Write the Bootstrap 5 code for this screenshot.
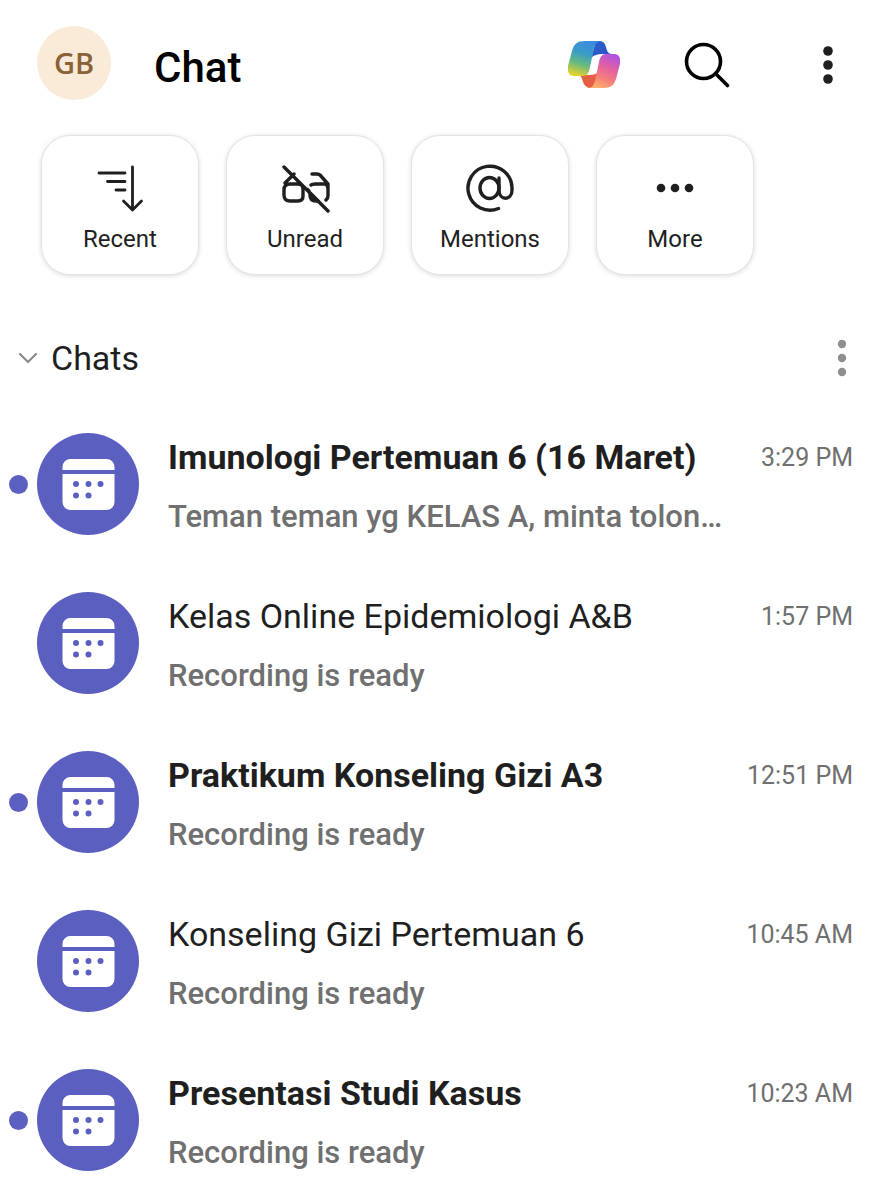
<!DOCTYPE html>
<html lang="id">
<head>
<meta charset="utf-8">
<meta name="viewport" content="width=device-width, initial-scale=1">
<title>Chat</title>
<link href="https://cdn.jsdelivr.net/npm/bootstrap@5.3.0/dist/css/bootstrap.min.css" rel="stylesheet">
<style>
  body { font-family: Roboto, "Liberation Sans", sans-serif; color: #1f1f1f; background: #fff; }
  .btn { --bs-btn-color: #1f1f1f; }
  .app-bar { padding: 26px 60px 0 37px; height: 126px; }
  .profile { width: 74px; height: 74px; background: #faebd9; color: #8a6238; font: 600 29px/74px "Open Sans", sans-serif; }
  .screen-title { font-size: 42px; line-height: 52px; font-weight: 500; color: #000; margin: 16px 0 0 43px; }
  .bar-actions { gap: 64px; padding-top: 12px; }
  .overflow-menu { margin-left: 29px; }
  .filters { gap: 27px; padding: 9px 41px 0; }
  .filter { width: 158px; height: 140px; border: 1px solid #e4e4e4; border-radius: 29px; box-shadow: 0 1px 5px rgba(0,0,0,.14); font-size: 24px; line-height: 28px; }
  .filter svg { margin-top: 6px; }
  .section-bar { padding: 0 46px 0 18px; margin-top: 63px; height: 40px; }
  .section-title { font-size: 34px; line-height: 40px; gap: 13px; padding-top: 2px; }
  .chats { padding-top: 55px; }
  .chat { padding: 0 40px 0 9px; margin-bottom: 57px; height: 102px; color: #1f1f1f; }
  .unread-slot { width: 28px; }
  .unread-slot span { width: 19px; height: 19px; background: #5b5fc0; }
  .chat-body { margin-left: 29px; padding-top: 3px; }
  .chat-name { font-size: 34px; line-height: 42px; font-weight: 400; }
  .unread .chat-name { font-weight: 700; }
  .chat-time { font-size: 25px; line-height: 44px; color: #707070; }
  .chat-preview { font-size: 31px; line-height: 40px; font-weight: 500; color: #707070; margin: 17px 100px 0 0; }
</style>
</head>
<body>
<svg class="d-none" aria-hidden="true">
  <symbol id="meeting" viewBox="0 0 102 102">
    <circle cx="51" cy="51" r="51" fill="#5b5fc0"/>
    <path fill="#fff" d="M25.500 37v-3a8 8 0 0 1 8-8h36a8 8 0 0 1 8 8v3zM25.500 41h52v28a8 8 0 0 1-8 8h-36a8 8 0 0 1-8-8z"/>
    <g fill="#5b5fc0"><circle cx="39" cy="51" r="3"/><circle cx="51.500" cy="51" r="3"/><circle cx="63.500" cy="51" r="3"/><circle cx="39" cy="62.500" r="3"/><circle cx="51.500" cy="62.500" r="3"/></g>
  </symbol>
</svg>

<header class="app-bar d-flex align-items-start">
  <button class="profile btn p-0 border-0 rounded-circle flex-shrink-0" type="button">GB</button>
  <h1 class="screen-title mb-0">Chat</h1>
  <div class="bar-actions d-flex align-items-center ms-auto">
    <button class="btn p-0 border-0 d-flex" type="button" aria-label="Copilot">
      <svg width="52" height="54" viewBox="0 -2 52 54">
        <defs>
          <linearGradient id="cool" x1=".6" y1="0" x2=".3" y2="1"><stop offset="0" stop-color="#3f8be0"/><stop offset=".35" stop-color="#3a9cc8"/><stop offset=".65" stop-color="#63b884"/><stop offset="1" stop-color="#e6d22c"/></linearGradient>
          <linearGradient id="warm" x1=".75" y1="0" x2=".35" y2="1"><stop offset="0" stop-color="#b052e6"/><stop offset=".4" stop-color="#e2629f"/><stop offset=".7" stop-color="#f47d7c"/><stop offset="1" stop-color="#fbb06c"/></linearGradient>
          <linearGradient id="deep" x1="0" y1="0" x2="1" y2="1"><stop offset="0" stop-color="#2a62cc"/><stop offset="1" stop-color="#2c50c0"/></linearGradient>
          <linearGradient id="ember" x1="0" y1="0" x2="1" y2="1"><stop offset="0" stop-color="#d9643f"/><stop offset="1" stop-color="#ee5b48"/></linearGradient>
        </defs>
        <path fill="url(#deep)" d="M28 1h4c3 0 5 2 6 6 1 4 2 7 6 7H34c-4 0-8 1-11 4z"/>
        <path fill="url(#ember)" d="M27 48h-4c-4 0-6-2-8-6-1-4-2-7-6-7h9c5 0 8 0 11-2z"/>
        <path fill="url(#cool)" d="M17 1h17c-5 0-7 3-8 7l-4 19c-1 6-3 9-7 9H6c-5 0-7-4-6-10L4 11C6 4 9 1 17 1z"/>
        <path fill="url(#warm)" d="M36 48H20c4 0 6-3 7-7l4-19c1-5 3-8 7-8h8c5 0 7 4 6 10l-4 15c-2 6-5 9-12 9z"/>
      </svg>
    </button>
    <button class="btn p-0 border-0 d-flex" type="button" aria-label="Search">
      <svg width="46" height="46" viewBox="0 0 46 46" fill="none" stroke="#000" stroke-width="3.6" stroke-linecap="round"><circle cx="19.500" cy="19.500" r="17"/><path d="M31.500 31.500 43.500 43.500"/></svg>
    </button>
    <button class="overflow-menu btn p-0 border-0 d-flex" type="button" aria-label="More options">
      <svg width="10" height="38" viewBox="0 0 10 38" fill="#1f1f1f"><circle cx="5" cy="5" r="4.800"/><circle cx="5" cy="19" r="4.800"/><circle cx="5" cy="33" r="4.800"/></svg>
    </button>
  </div>
</header>

<nav class="filters d-flex flex-wrap" aria-label="Filters">
  <button class="filter btn bg-white p-0 d-flex flex-column align-items-center justify-content-center" type="button">
    <svg width="50" height="50" viewBox="0 0 50 50" fill="none" stroke="#1f1f1f" stroke-width="2.800" stroke-linecap="round" stroke-linejoin="round"><path d="M4 10h26M12.500 18.500H30M21 27h9M37.500 4v43M28.500 38l9 9 9-9"/></svg>
    <span class="mt-2 pt-1">Recent</span>
  </button>
  <button class="filter btn bg-white p-0 d-flex flex-column align-items-center justify-content-center" type="button">
    <svg width="50" height="50" viewBox="0 0 50 50" fill="none" stroke="#1f1f1f" stroke-width="3.400" stroke-linecap="round" stroke-linejoin="round"><path d="M4 4l44 44M5 20l9-9M10 21h8q5 0 5 5v7q0 5-5 5h-8q-6 0-6-6v-5q0-6 6-6M32 11h5q2 0 3 1l8 9v8M31 22q1-1 4-1h10q3 1 3 6v6q0 2-2 4M23 26q4-1 6 2"/><path fill="#1f1f1f" d="M30 30v2q0 6 6 6h2z"/></svg>
    <span class="mt-2 pt-1">Unread</span>
  </button>
  <button class="filter btn bg-white p-0 d-flex flex-column align-items-center justify-content-center" type="button">
    <svg width="50" height="50" viewBox="0 0 50 50" fill="none" stroke="#1f1f1f" stroke-width="3.400" stroke-linecap="round"><path d="M33.500 45.500A22 22 0 1 1 47 25v2c0 11-13 11-13 0V15"/><ellipse cx="24.500" cy="25" rx="9.500" ry="10.500"/></svg>
    <span class="mt-2 pt-1">Mentions</span>
  </button>
  <button class="filter btn bg-white p-0 d-flex flex-column align-items-center justify-content-center" type="button">
    <svg width="50" height="50" viewBox="0 0 50 50" fill="#1f1f1f"><circle cx="11" cy="25" r="4.300"/><circle cx="25" cy="25" r="4.300"/><circle cx="39" cy="25" r="4.300"/></svg>
    <span class="mt-2 pt-1">More</span>
  </button>
</nav>

<main>
  <div class="section-bar d-flex align-items-center justify-content-between">
    <h2 class="mb-0 d-flex"><button class="section-title btn p-0 border-0 d-flex align-items-center" type="button" aria-expanded="true">
      <svg width="20" height="14" viewBox="0 0 20 14" fill="none" stroke="#8c8c8c" stroke-width="2.200" stroke-linecap="round" stroke-linejoin="round"><path d="M2 3l8 8 8-8"/></svg>
      Chats
    </button></h2>
    <button class="btn p-0 border-0 d-flex" type="button" aria-label="Chats options">
      <svg width="10" height="38" viewBox="0 0 10 38" fill="#8f8f8f"><circle cx="5" cy="5" r="4.200"/><circle cx="5" cy="19" r="4.200"/><circle cx="5" cy="33" r="4.200"/></svg>
    </button>
  </div>

  <div class="chats">
    <a href="#" class="chat unread d-flex text-decoration-none">
      <div class="unread-slot d-flex align-items-center flex-shrink-0"><span class="rounded-circle"></span></div>
      <svg class="flex-shrink-0" width="102" height="102" aria-hidden="true"><use href="#meeting"/></svg>
      <div class="chat-body flex-grow-1 overflow-hidden">
        <div class="d-flex justify-content-between"><div class="chat-name text-truncate">Imunologi Pertemuan 6 (16 Maret)</div><div class="chat-time text-nowrap">3:29 PM</div></div>
        <div class="chat-preview text-truncate">Teman teman yg KELAS A, minta tolon…</div>
      </div>
    </a>
    <a href="#" class="chat d-flex text-decoration-none">
      <div class="unread-slot flex-shrink-0"></div>
      <svg class="flex-shrink-0" width="102" height="102" aria-hidden="true"><use href="#meeting"/></svg>
      <div class="chat-body flex-grow-1 overflow-hidden">
        <div class="d-flex justify-content-between"><div class="chat-name text-truncate">Kelas Online Epidemiologi A&amp;B</div><div class="chat-time text-nowrap">1:57 PM</div></div>
        <div class="chat-preview text-truncate">Recording is ready</div>
      </div>
    </a>
    <a href="#" class="chat unread d-flex text-decoration-none">
      <div class="unread-slot d-flex align-items-center flex-shrink-0"><span class="rounded-circle"></span></div>
      <svg class="flex-shrink-0" width="102" height="102" aria-hidden="true"><use href="#meeting"/></svg>
      <div class="chat-body flex-grow-1 overflow-hidden">
        <div class="d-flex justify-content-between"><div class="chat-name text-truncate">Praktikum Konseling Gizi A3</div><div class="chat-time text-nowrap">12:51 PM</div></div>
        <div class="chat-preview text-truncate">Recording is ready</div>
      </div>
    </a>
    <a href="#" class="chat d-flex text-decoration-none">
      <div class="unread-slot flex-shrink-0"></div>
      <svg class="flex-shrink-0" width="102" height="102" aria-hidden="true"><use href="#meeting"/></svg>
      <div class="chat-body flex-grow-1 overflow-hidden">
        <div class="d-flex justify-content-between"><div class="chat-name text-truncate">Konseling Gizi Pertemuan 6</div><div class="chat-time text-nowrap">10:45 AM</div></div>
        <div class="chat-preview text-truncate">Recording is ready</div>
      </div>
    </a>
    <a href="#" class="chat unread d-flex text-decoration-none mb-0">
      <div class="unread-slot d-flex align-items-center flex-shrink-0"><span class="rounded-circle"></span></div>
      <svg class="flex-shrink-0" width="102" height="102" aria-hidden="true"><use href="#meeting"/></svg>
      <div class="chat-body flex-grow-1 overflow-hidden">
        <div class="d-flex justify-content-between"><div class="chat-name text-truncate">Presentasi Studi Kasus</div><div class="chat-time text-nowrap">10:23 AM</div></div>
        <div class="chat-preview text-truncate">Recording is ready</div>
      </div>
    </a>
  </div>
</main>
<script src="https://cdn.jsdelivr.net/npm/bootstrap@5.3.0/dist/js/bootstrap.bundle.min.js"></script>
</body>
</html>
